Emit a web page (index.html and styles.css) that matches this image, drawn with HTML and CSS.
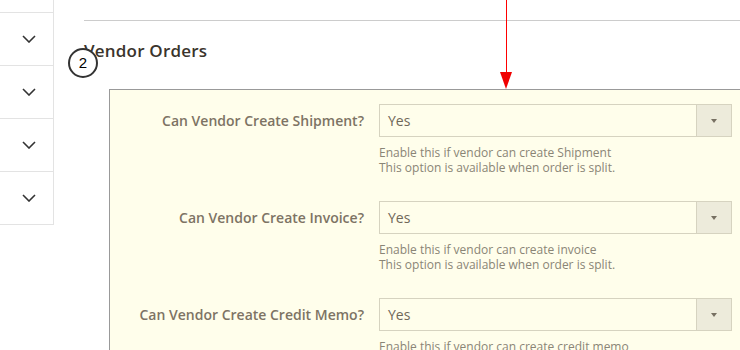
FILE: index.html
```html
<!DOCTYPE html>
<html lang="en">
<head>
    <meta charset="UTF-8">
    <title>Vendor Orders</title>
    <link rel="stylesheet" href="styles.css">
</head>
<body>
    <div class="page">
        <div class="sidebar">
            <div class="side-top"></div>
            <div class="side-item"><svg width="14" height="8" viewBox="0 0 14 8"><polyline points="1,1 7,7 13,1" /></svg></div>
            <div class="side-item"><svg width="14" height="8" viewBox="0 0 14 8"><polyline points="1,1 7,7 13,1" /></svg></div>
            <div class="side-item"><svg width="14" height="8" viewBox="0 0 14 8"><polyline points="1,1 7,7 13,1" /></svg></div>
            <div class="side-item"><svg width="14" height="8" viewBox="0 0 14 8"><polyline points="1,1 7,7 13,1" /></svg></div>
        </div>

        <div class="main">
            <div class="divider"></div>
            <div class="section-head">
                <h2>Vendor Orders</h2>
                <span class="badge">2</span>
            </div>

            <div class="config-box">
                <div class="row">
                    <label>Can Vendor Create Shipment?</label>
                    <div class="control">
                        <div class="select"><span>Yes</span><span class="select-btn"></span></div>
                        <p class="note">Enable this if vendor can create Shipment<br>This option is available when order is split.</p>
                    </div>
                </div>
                <div class="row">
                    <label>Can Vendor Create Invoice?</label>
                    <div class="control">
                        <div class="select"><span>Yes</span><span class="select-btn"></span></div>
                        <p class="note">Enable this if vendor can create invoice<br>This option is available when order is split.</p>
                    </div>
                </div>
                <div class="row">
                    <label>Can Vendor Create Credit Memo?</label>
                    <div class="control">
                        <div class="select"><span>Yes</span><span class="select-btn"></span></div>
                        <p class="note">Enable this if vendor can create credit memo<br>This option is available when order is split.</p>
                    </div>
                </div>
            </div>

            <!-- annotation arrow -->
            <div class="arrow"></div>
        </div>
    </div>
</body>
</html>
```

FILE: styles.css
```css
body {
    margin: 0;
    font-family: "Open Sans", "Liberation Sans", sans-serif;
    background: #fff;
    overflow: hidden;
}
.page {
    display: flex;
    height: 350px;
    overflow: hidden;
}
.sidebar {
    width: 54px;
    flex-shrink: 0;
}
.side-top {
    height: 12px;
    border-right: 1px solid #e3e3e3;
    border-bottom: 1px solid #e3e3e3;
}
.side-item {
    height: 52px;
    border-right: 1px solid #e3e3e3;
    border-bottom: 1px solid #e3e3e3;
    display: flex;
    align-items: center;
    justify-content: flex-end;
    padding-right: 17px;
}
.side-item svg polyline {
    fill: none;
    stroke: #333;
    stroke-width: 1.6;
}
.main {
    position: relative;
    flex: 1;
    padding: 20px 0 0 30px;
    overflow: hidden;
}
.divider {
    border-top: 1px solid #cccccc;
}
.section-head {
    position: relative;
    height: 68px;
}
.section-head h2 {
    margin: 0;
    padding-top: 19px;
    font-size: 17px;
    font-weight: 600;
    color: #3a342c;
    line-height: 22px;
    letter-spacing: 0.2px;
}
.badge {
    position: absolute;
    left: -16px;
    top: 27px;
    width: 26px;
    height: 26px;
    border: 2px solid #333;
    border-radius: 50%;
    background: #fff;
    color: #000;
    font-family: "Liberation Sans", sans-serif;
    font-size: 15px;
    line-height: 26px;
    text-align: center;
}
.config-box {
    margin-left: 25px;
    width: 700px;
    height: 300px;
    background: #fffeeb;
    border-top: 1px solid #999;
    border-left: 1px solid #999;
    padding-top: 14px;
}
.row {
    display: grid;
    grid-template-columns: 254px 353px;
    column-gap: 15px;
    margin-bottom: 26px;
}
.row label {
    text-align: right;
    font-size: 14px;
    font-weight: 600;
    color: #7d7364;
    line-height: 33px;
}
.select {
    display: flex;
    height: 31px;
    border: 1px solid #d6d3c0;
    background: #fffeeb;
}
.select span:first-child {
    flex: 1;
    padding-left: 8px;
    font-size: 14px;
    line-height: 31px;
    color: #6f6859;
}
.select-btn {
    position: relative;
    width: 34px;
    border-left: 1px solid #d6d3c0;
    background: #edebdb;
}
.select-btn::after {
    content: "";
    position: absolute;
    left: 14px;
    top: 14px;
    border-left: 3.5px solid transparent;
    border-right: 3.5px solid transparent;
    border-top: 4px solid #777062;
}
.note {
    margin: 8px 0 0;
    font-size: 12px;
    line-height: 15px;
    color: #8a8576;
}
.arrow {
    position: absolute;
    left: 452px;
    top: 0;
    width: 1px;
    height: 72px;
    background: #ff0000;
}
.arrow::after {
    content: "";
    position: absolute;
    left: -6px;
    top: 72px;
    border-left: 6.5px solid transparent;
    border-right: 6.5px solid transparent;
    border-top: 17px solid #f00000;
}
```
